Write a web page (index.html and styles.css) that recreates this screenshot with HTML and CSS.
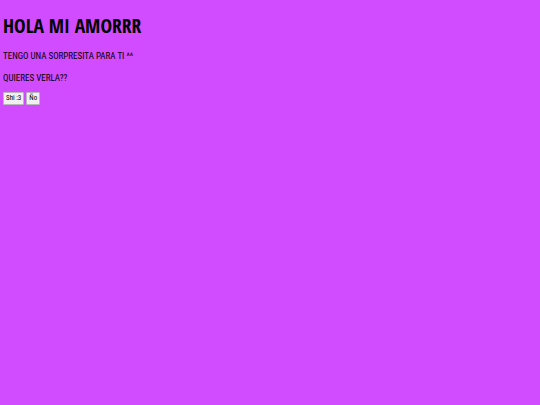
FILE: index.html
```html
<!DOCTYPE html>
<html>
<head>
<meta charset="utf-8">
<link rel="stylesheet" href="styles.css">
</head>
<body>
<h1 class="title">HOLA MI AMORRR</h1>
<p class="line">TENGO UNA SORPRESITA PARA TI ^^</p>
<p class="line">QUIERES VERLA??</p>
<div class="buttons">
<button class="btn">Shi :3</button>
<button class="btn">Ño</button>
</div>
</body>
</html>
```
FILE: styles.css
```css
html, body {
  background: #d14bff;
}
body {
  margin: 3px;
  font-family: "Roboto Condensed", "DejaVu Sans", sans-serif;
  color: #000;
}
.title {
  font-family: "Open Sans Condensed", "Roboto Condensed", sans-serif;
  font-size: 19.5px;
  line-height: 1.2;
  font-weight: bold;
  margin: 11px 0 13px;
}
.line {
  font-size: 9px;
  line-height: 12px;
  font-weight: 400;
  margin: 10px 0;
}
.line + .line {
  margin-bottom: 8px;
}
.buttons {
  display: flex;
  gap: 2px;
}
.btn {
  font-family: "Roboto Condensed", sans-serif;
  font-size: 7px;
  line-height: 7px;
  padding: 2px 2px;
  background: #f0f0f0;
  border: 1px solid #b8b8b8;
  border-radius: 1px;
  color: #000;
}
```
